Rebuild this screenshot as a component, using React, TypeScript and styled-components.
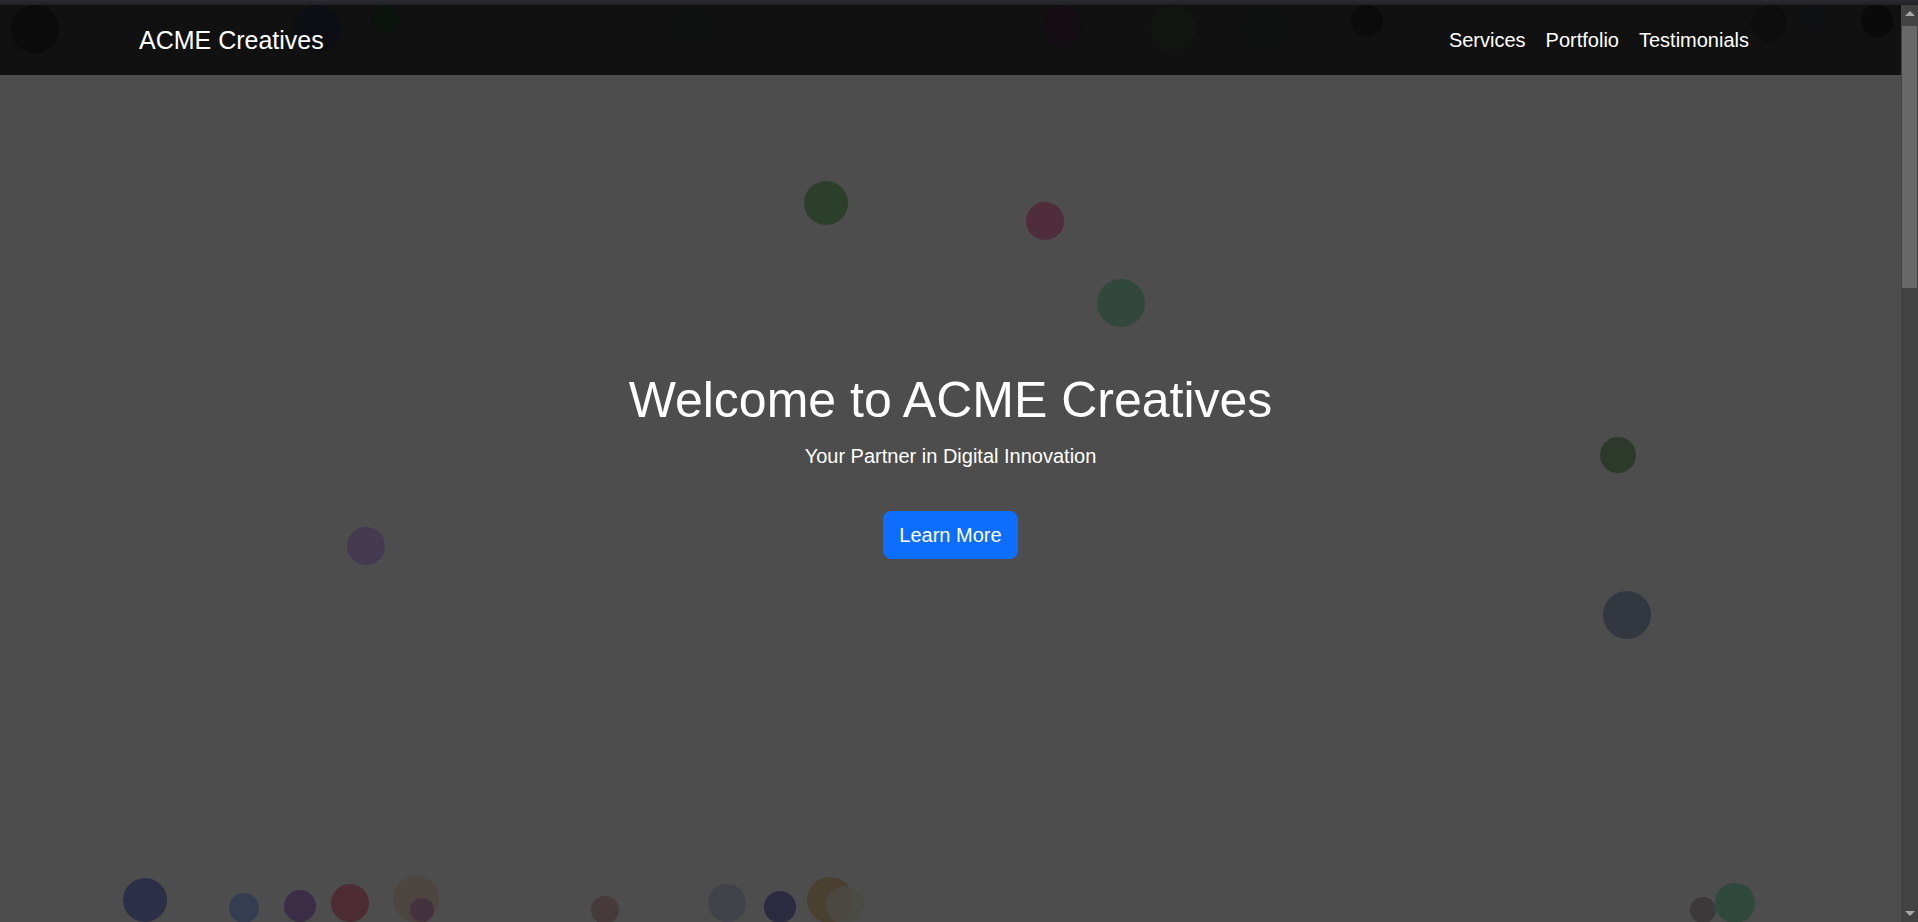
import React from "react";
import styled, { createGlobalStyle } from "styled-components";

type Dot = { x: number; y: number; r: number; c: string; o?: number };

// Particle positions (centre x/y relative to the hero, radius, colour)
const dots: Dot[] = [
  // under the translucent navbar
  { x: 35, y: 24, r: 24, c: "#323232" },
  { x: 317, y: 24, r: 24, c: "#3b3b5b" },
  { x: 385, y: 14, r: 14, c: "#375237" },
  { x: 690, y: 22, r: 20, c: "#494f4d" },
  { x: 1061, y: 20, r: 20, c: "#5b3b5b" },
  { x: 1173, y: 23, r: 23, c: "#4d5b49" },
  { x: 1267, y: 23, r: 23, c: "#445249" },
  { x: 1367, y: 16, r: 16, c: "#323232" },
  { x: 1769, y: 18, r: 18, c: "#3b3b3b" },
  { x: 1813, y: 12, r: 14, c: "#4a4d58" },
  { x: 1877, y: 16, r: 16, c: "#2d2d2d" },
  // hero body
  { x: 826, y: 198, r: 22, c: "#2c3f2a" },
  { x: 1045, y: 216, r: 19, c: "#4f2d3a" },
  { x: 1121, y: 298, r: 24, c: "#32483c" },
  { x: 366, y: 541, r: 19, c: "#443b52" },
  { x: 1618, y: 450, r: 18, c: "#2d3a2b" },
  { x: 1627, y: 610, r: 24, c: "#333740" },
  // bottom row
  { x: 145, y: 895, r: 22, c: "#2c2f48" },
  { x: 244, y: 903, r: 15, c: "#353e50" },
  { x: 300, y: 901, r: 16, c: "#3a2d45" },
  { x: 350, y: 898, r: 19, c: "#4e2c35" },
  { x: 416, y: 894, r: 23, c: "#4d4540" },
  { x: 422, y: 905, r: 12, c: "#44333e" },
  { x: 605, y: 905, r: 14, c: "#463a3a" },
  { x: 727, y: 898, r: 19, c: "#42424a" },
  { x: 780, y: 902, r: 16, c: "#2c2a40" },
  { x: 830, y: 895, r: 23, c: "#4a4030" },
  { x: 845, y: 900, r: 19, c: "#4b4b45", o: 0.8 },
  { x: 1703, y: 905, r: 13, c: "#3c393a" },
  { x: 1735, y: 898, r: 20, c: "#2f4a3c" },
];

const GlobalStyle = createGlobalStyle`
  html, body, #root { margin: 0; height: 100%; }
  body {
    background: #25252b;
    overflow: hidden;
    font-family: "Liberation Sans", Arial, Helvetica, sans-serif;
  }
  * { box-sizing: border-box; }
`;

const Shell = styled.div`
  display: flex;
  flex-direction: column;
  height: 100vh;
`;

const TopStrip = styled.div`
  flex: none;
  height: 5px;
  background: linear-gradient(#2b2b32, #1f1f25);
`;

const Viewport = styled.div`
  flex: 1;
  min-height: 0;
  display: flex;
`;

const Page = styled.main`
  flex: 1;
  min-width: 0;
  overflow: hidden;
  background: #4d4d4d;
  color: #fff;
`;

const ScrollRail = styled.div`
  flex: none;
  width: 17px;
  display: flex;
  flex-direction: column;
  background: #424242;
`;

const ArrowButton = styled.div<{ $down?: boolean }>`
  flex: none;
  height: 17px;
  display: flex;
  align-items: center;
  justify-content: center;
  &::before {
    content: "";
    width: 0;
    height: 0;
    border-left: 5px solid transparent;
    border-right: 5px solid transparent;
    ${(p) =>
      p.$down
        ? "border-top: 5px solid #a8a8a8;"
        : "border-bottom: 5px solid #a8a8a8;"}
  }
`;

const Thumb = styled.div`
  flex: none;
  margin: 4px 1px 0;
  height: 262px;
  background: #686868;
`;

const RailSpacer = styled.div`
  flex: 1;
`;

const Hero = styled.section`
  position: relative;
  height: 100%;
  overflow: hidden;
  display: flex;
  flex-direction: column;
  align-items: center;
  justify-content: center;
  text-align: center;
`;

const Particles = styled.div`
  position: absolute;
  inset: 0;
  z-index: 0;
  pointer-events: none;
`;

const Particle = styled.span<{ $c: string }>`
  position: absolute;
  border-radius: 50%;
  background: ${(p) => p.$c};
  filter: blur(0.4px);
`;

const NavBar = styled.header`
  position: absolute;
  top: 0;
  left: 0;
  right: 0;
  height: 70px;
  z-index: 2;
  background: rgba(0, 0, 0, 0.78);
`;

const NavInner = styled.nav`
  height: 100%;
  display: flex;
  align-items: center;
  justify-content: space-between;
  padding: 0 142px 0 139px;
`;

const Brand = styled.a`
  font-size: 25px;
  color: #fff;
  text-decoration: none;
  line-height: 1.2;
`;

const NavList = styled.ul`
  display: flex;
  list-style: none;
  margin: 0;
  padding: 0;
`;

const NavLink = styled.a`
  display: block;
  padding: 0 10px;
  font-size: 20px;
  line-height: 1.5;
  color: #fff;
  text-decoration: none;
`;

const HeroContent = styled.div`
  position: relative;
  z-index: 1;
  display: flex;
  flex-direction: column;
  align-items: center;
  margin-top: 2px;
`;

const Title = styled.h1`
  margin: 0;
  font-size: 50px;
  font-weight: 400;
  line-height: 1.2;
`;

const Subtitle = styled.p`
  margin: 11px 0 0;
  font-size: 20px;
  line-height: 1.5;
`;

const CtaButton = styled.a`
  margin-top: 40px;
  display: inline-block;
  padding: 8px 15px;
  border: 1px solid #0d6efd;
  border-radius: 8px;
  background: #0d6efd;
  color: #fff;
  font-size: 20px;
  line-height: 1.5;
  text-decoration: none;
`;

export default function App() {
  return (
    <>
      <GlobalStyle />
      <Shell>
        <TopStrip />
        <Viewport>
          <Page>
            <Hero>
              <Particles>
                {dots.map((d, i) => (
                  <Particle
                    key={i}
                    $c={d.c}
                    style={{
                      left: d.x - d.r,
                      top: d.y - d.r,
                      width: d.r * 2,
                      height: d.r * 2,
                      opacity: d.o ?? 1,
                    }}
                  />
                ))}
              </Particles>
              <NavBar>
                <NavInner>
                  <Brand href="#">ACME Creatives</Brand>
                  <NavList>
                    <li><NavLink href="#services">Services</NavLink></li>
                    <li><NavLink href="#portfolio">Portfolio</NavLink></li>
                    <li><NavLink href="#testimonials">Testimonials</NavLink></li>
                  </NavList>
                </NavInner>
              </NavBar>
              <HeroContent>
                <Title>Welcome to ACME Creatives</Title>
                <Subtitle>Your Partner in Digital Innovation</Subtitle>
                <CtaButton href="#services">Learn More</CtaButton>
              </HeroContent>
            </Hero>
          </Page>
          <ScrollRail>
            <ArrowButton />
            <Thumb />
            <RailSpacer />
            <ArrowButton $down />
          </ScrollRail>
        </Viewport>
      </Shell>
    </>
  );
}
